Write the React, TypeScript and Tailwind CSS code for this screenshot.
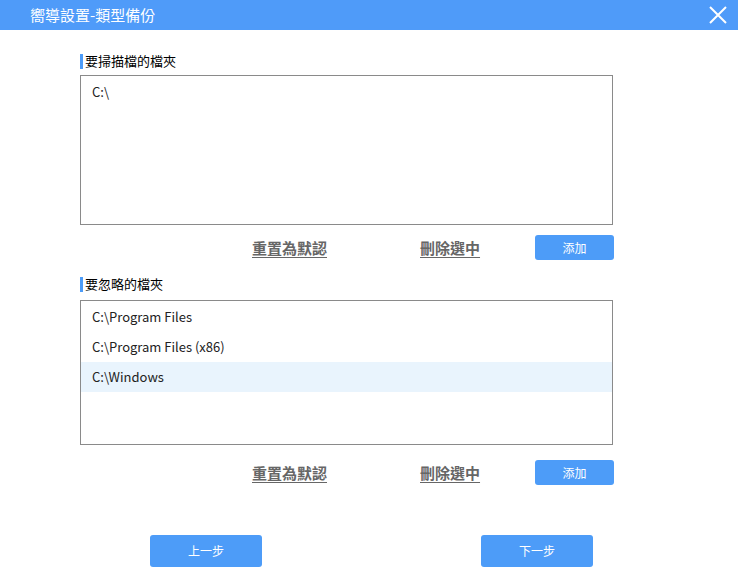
import React from "react";

const font = { fontFamily: '"Noto Sans CJK TC", "Noto Sans CJK SC", sans-serif' };

function SectionLabel({ text }: { text: string }) {
  return (
    <div className="flex items-center h-[16px]">
      <div className="w-[3px] h-[15px] bg-[#4d9cf8]" />
      <span className="ml-[2px] text-[13px] leading-[16px] text-black">{text}</span>
    </div>
  );
}

function ActionRow() {
  return (
    <div className="flex items-center h-[25px]">
      <span className="ml-[172px] text-[15px] font-bold text-[#666] underline underline-offset-[3px] leading-[20px]">重置為默認</span>
      <span className="ml-[93px] text-[15px] font-bold text-[#666] underline underline-offset-[3px] leading-[20px]">刪除選中</span>
      <button className="ml-[55px] w-[79px] h-[25px] rounded-[3px] bg-[#4d9cf8] text-white text-[12px]">添加</button>
    </div>
  );
}

export default function App() {
  return (
    <div className="w-[738px] h-[588px] bg-white relative overflow-hidden" style={font}>
      <div className="h-[30px] bg-[#4f9bf9] flex items-center justify-between">
        <span className="ml-[30px] text-white text-[15px] leading-[20px]">嚮導設置-類型備份</span>
        <svg width="18" height="18" viewBox="0 0 18 18" className="mr-[11px]">
          <path d="M1 1 L17 17 M17 1 L1 17" stroke="white" strokeWidth="2" fill="none" />
        </svg>
      </div>
      <div className="ml-[80px] w-[535px] flex flex-col">
        <div className="mt-[23px]">
          <SectionLabel text="要掃描檔的檔夾" />
        </div>
        <div className="mt-[6px] w-[533px] h-[150px] border border-[#8a8a8a] bg-white">
          <div className="pl-[11px] pt-[7px] text-[13px] leading-[18px] text-[#222]">C:\</div>
        </div>
        <div className="mt-[10px]">
          <ActionRow />
        </div>
        <div className="mt-[16px]">
          <SectionLabel text="要忽略的檔夾" />
        </div>
        <div className="mt-[8px] w-[533px] h-[145px] border border-[#8a8a8a] bg-white pt-[1px]">
          {["C:\\Program Files", "C:\\Program Files (x86)", "C:\\Windows"].map((t, i) => (
            <div
              key={t}
              className={`h-[30px] flex items-center pl-[11px] text-[13px] text-[#222] ${i === 2 ? "bg-[#e9f4fd]" : ""}`}
            >
              {t}
            </div>
          ))}
        </div>
        <div className="mt-[15px]">
          <ActionRow />
        </div>
        <div className="mt-[50px] flex">
          <button className="ml-[70px] w-[112px] h-[32px] rounded-[3px] bg-[#4d9cf8] text-white text-[12px]">上一步</button>
          <button className="ml-[219px] w-[112px] h-[32px] rounded-[3px] bg-[#4d9cf8] text-white text-[12px]">下一步</button>
        </div>
      </div>
    </div>
  );
}
